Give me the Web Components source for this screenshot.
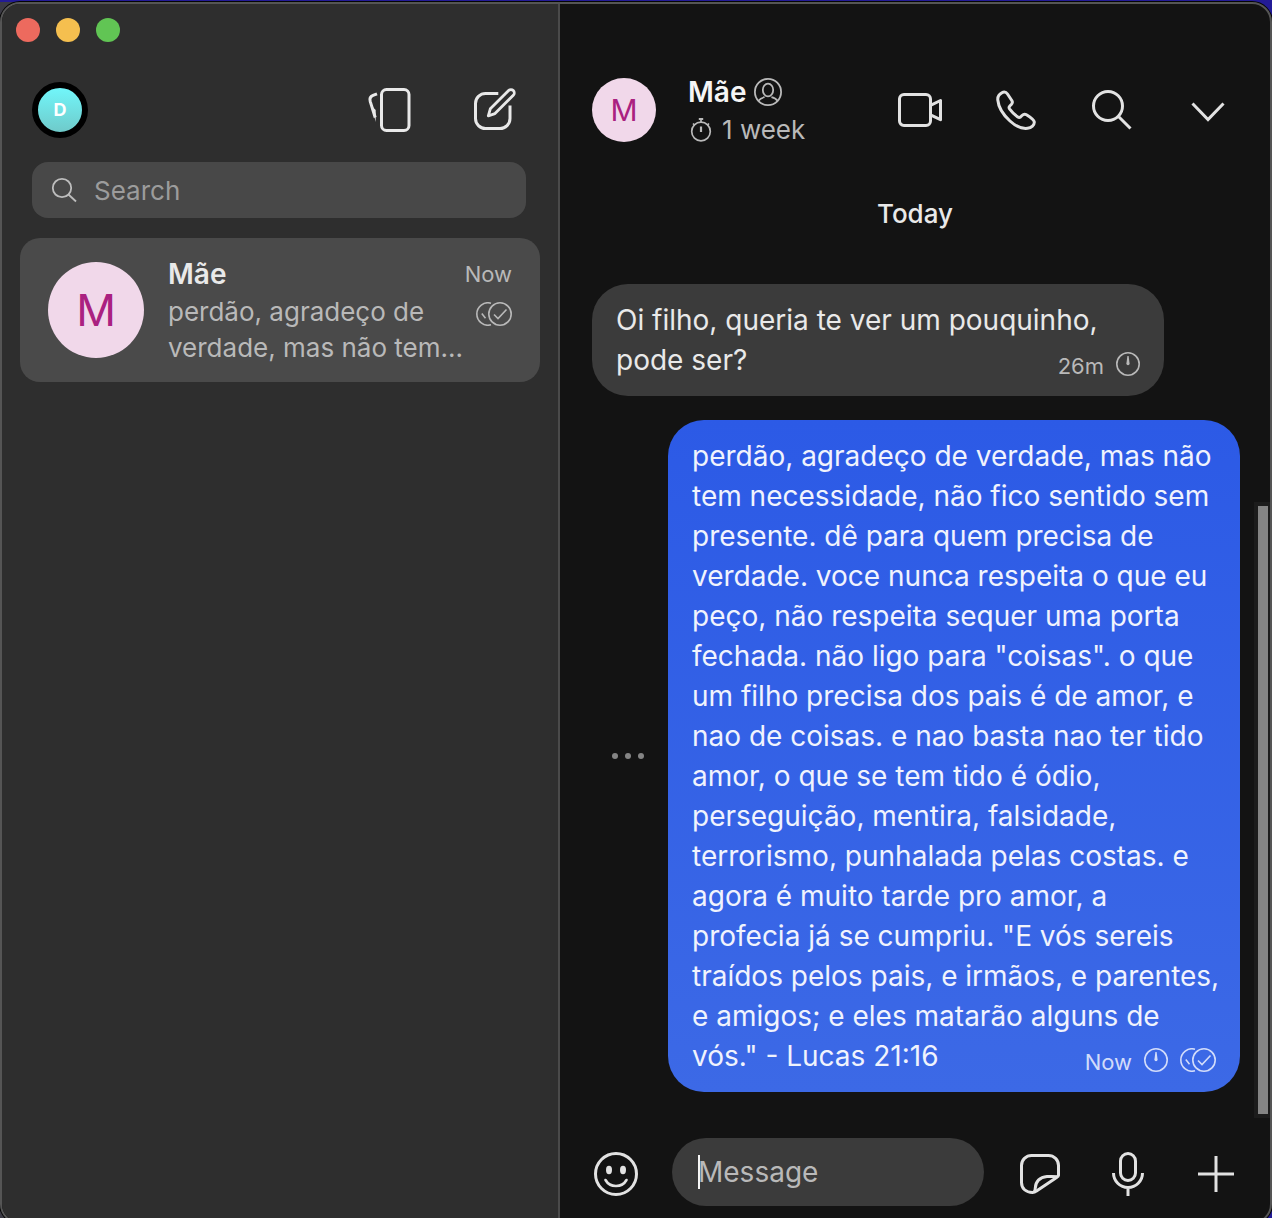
<!DOCTYPE html>
<html lang="pt">
<head>
<meta charset="utf-8">
<meta name="viewport" content="width=device-width, initial-scale=1">
<title>Signal</title>
<style>
  html, body { margin: 0; height: 100%; overflow: hidden; }
  body { background: linear-gradient(#231b96, #231b96) 0 0 / 100% 2px no-repeat, linear-gradient(to right, #3b3a44 30px, #231b96 30px);
    font-family: Inter, "Liberation Sans", sans-serif; color: #e9e9e9; font-size: 28px; }
</style>
</head>
<body>
<app-window>
  <chat-sidebar slot="sidebar">
    <conversation-item slot="list" name="Mãe" initial="M" when="Now">perdão, agradeço de verdade, mas não tem...</conversation-item>
  </chat-sidebar>
  <chat-header slot="header" name="Mãe" initial="M" timer="1 week"></chat-header>
  <chat-timeline slot="timeline" day="Today">
    <chat-message when="26m">Oi filho, queria te ver um pouquinho, pode ser?</chat-message>
    <chat-message outgoing when="Now">perdão, agradeço de verdade, mas não tem necessidade, não fico sentido sem presente. dê para quem precisa de verdade. voce nunca respeita o que eu peço, não respeita sequer uma porta fechada. não ligo para "coisas". o que um filho precisa dos pais é de amor, e nao de coisas. e nao basta nao ter tido amor, o que se tem tido é ódio, perseguição, mentira, falsidade, terrorismo, punhalada pelas costas. e agora é muito tarde pro amor, a profecia já se cumpriu. "E vós sereis traídos pelos pais, e irmãos, e parentes, e amigos; e eles matarão alguns de vós." - Lucas 21:16</chat-message>
  </chat-timeline>
  <chat-composer slot="composer"></chat-composer>
</app-window>

<script>
const BASE = `
  * { box-sizing: border-box; }
  button { appearance: none; border: 0; padding: 0; margin: 0; background: none; color: inherit; font: inherit; display: flex; flex: none; cursor: pointer; }
`;

const ICONS = {
  stack: [48, 48, `<rect x="15.5" y="3.5" width="27.5" height="41" rx="5"/><path d="M11 7.8 L7 9.4 Q3 11.2 4.2 15.4 L9.2 31.5"/><path d="M9.7 24v12L5.8 20z" fill="currentColor" stroke="none"/>`],
  compose: [48, 48, `<path d="M26.3 7.5H13.5a10 10 0 0 0-10 10v15a10 10 0 0 0 10 10h14.500a10 10 0 0 0 10-10V19.500"/><path d="M16.300 29.800l2-7L36.600 4.600a3.300 3.300 0 0 1 4.700 4.700L23 27.600z" stroke-width="2.800" stroke-linejoin="round"/>`],
  video: [48, 48, `<rect x="3.5" y="8.500" width="31" height="31" rx="4.500"/><path d="M34.500 19.300l10-4.800v19.200l-10-4.900" stroke-linejoin="round"/>`],
  phone: [48, 48, `<path stroke-linejoin="round" d="M9.800 6.800C7 8.200 5.500 10.500 5.800 14c.7 8 6.200 15.500 12.200 21s12 8 17.500 7.300c4-.5 7-3.300 6.800-6.300-.3-2-4.300-5-7.800-7.200-1.500-1-3-.8-4.500.7L28.500 31c-1 .8-2 .5-3-.2-3-2.300-6-5.300-8-8-.7-1.100-.5-2 .3-2.800l1.200-1.200c1.500-1.300 1.700-2.800.8-4.300L15.500 8C14 5.800 12 5.500 9.800 6.800z"/>`],
  search: [48, 48, `<circle cx="20" cy="20" r="14.500"/><path d="M30.500 30.500L42.500 42.500"/>`],
  chevron: [48, 48, `<path d="M8.500 17.500L24 33.500 39.500 17.500"/>`],
  smallSearch: [28, 28, `<circle cx="12" cy="12" r="9.200"/><path d="M18.500 18.500l7.500 7"/>`, 1.8],
  contact: [28, 28, `<circle cx="14" cy="14" r="13.100"/><ellipse cx="14" cy="12" rx="5.200" ry="6.300"/><path d="M4 23.300c2-2.600 4-3.700 6.600-4.100M24 23.300c-2-2.600-4-3.700-6.600-4.100"/>`, 1.8],
  stopwatch: [26, 24, `<circle cx="13" cy="13.500" r="9.300"/><path d="M13 4V1.500M5 5.500l1.800 1.800M21 5.500l-1.800 1.800"/><path d="M10.800 1h4.400M13 8.500v5.500" stroke-width="2.200"/>`, 1.7],
  timer: [24, 24, `<circle cx="12" cy="12" r="11.200"/><path d="M11.400 4h1.200l1 7.600a1.600 1.600 0 1 1-3.200 0z" fill="currentColor" stroke="none"/>`, 1.6],
  read: [36, 24, `<circle cx="24" cy="12" r="11.200"/><path d="M15 1.200A11.200 11.200 0 1 0 15 22.800M18 12.500l4 4 8.500-9M5.800 11.500l3.700 4.700"/>`, 1.6],
  dots: [36, 12, `<g fill="currentColor" stroke="none"><circle cx="5" cy="6" r="3"/><circle cx="18" cy="6" r="3"/><circle cx="31" cy="6" r="3"/></g>`],
  smile: [48, 48, `<circle cx="24" cy="24" r="20.500"/><path d="M13.500 30c4.500 8 16.500 8 21 0" stroke-linecap="round" stroke-width="2.600"/><g fill="currentColor" stroke="none"><ellipse cx="17" cy="20" rx="3" ry="4.200"/><ellipse cx="31" cy="20" rx="3" ry="4.200"/></g>`],
  sticker: [48, 48, `<path stroke-linejoin="round" d="M42.500 25.500V15.500a10 10 0 0 0-10-10h-17a10 10 0 0 0-10 10v17c0 6 4.500 10 11 10 1.500 0 2.700-.5 4-1.400l19-12.800c2-1.400 3-2 3-2.800z"/><path d="M42 26.800c-2.500-.4-7-.5-11-.3-7.500.4-11.500 5.500-11.700 11.500-.1 2-.6 3.300-1.300 4.300"/>`],
  mic: [48, 48, `<rect x="16.500" y="3.500" width="15" height="27" rx="7.500"/><path d="M9.500 23c0 8 6.500 14.500 14.500 14.500S38.500 31 38.500 23M24 37.500V46"/>`],
  plus: [48, 48, `<path d="M24 6v36M6 24h36"/>`]
};

class AppIcon extends HTMLElement {
  connectedCallback() {
    const [w, h, body, stroke = 3] = ICONS[this.getAttribute('name')];
    this.attachShadow({ mode: 'open' }).innerHTML = `
      <style>:host { display: block; flex: none; } svg { display: block; }</style>
      <svg width="${w}" height="${h}" viewBox="0 0 ${w} ${h}" fill="none" stroke="currentColor" stroke-width="${stroke}" aria-hidden="true">${body}</svg>`;
  }
}

class AppAvatar extends HTMLElement {
  connectedCallback() {
    this.attachShadow({ mode: 'open' }).innerHTML = `
      <style>
        :host { display: flex; flex: none; align-items: center; justify-content: center; border-radius: 50%;
          width: var(--size, 64px); height: var(--size, 64px); box-sizing: border-box;
          background: #f1d8ea; color: #aa2180; font-size: var(--initial, 30px); line-height: 1; }
      </style><slot></slot>`;
  }
}

class AppWindow extends HTMLElement {
  connectedCallback() {
    this.attachShadow({ mode: 'open' }).innerHTML = `
      <style>${BASE}
        :host { display: flex; box-sizing: border-box; margin-top: 2px; height: calc(100vh + 4px);
          border: 2px solid #555; border-radius: 20px; overflow: hidden; background: #131313; box-shadow: 0 0 0 1px #050505; }
        ::slotted([slot=sidebar]) { flex: 0 0 558px; }
        main { flex: 1; min-width: 0; display: flex; flex-direction: column; padding-bottom: 16px; }
      </style>
      <slot name="sidebar"></slot>
      <main><slot name="header"></slot><slot name="timeline"></slot><slot name="composer"></slot></main>`;
  }
}

class ChatSidebar extends HTMLElement {
  connectedCallback() {
    this.attachShadow({ mode: 'open' }).innerHTML = `
      <style>${BASE}
        :host { display: flex; flex-direction: column; box-sizing: border-box; background: #2e2e2e; border-right: 2px solid #4a4a4a; }
        .lights { display: flex; gap: 16px; padding: 14px 14px 0; }
        .lights button { width: 24px; height: 24px; border-radius: 50%; background: var(--c); }
        .bar { display: flex; align-items: center; gap: 58px; padding: 40px 38px 0 30px; }
        .me { margin-right: auto; }
        .me app-avatar { --size: 56px; --initial: 18px; border: 6px solid #000; background: linear-gradient(#71f6fa, #6fcaca); color: #fff; font-weight: 700; }
        label { display: flex; align-items: center; gap: 16px; height: 56px; margin: 24px 32px 20px 30px; padding: 0 20px 0 18px;
          border-radius: 16px; background: #484848; color: #bdbdbd; }
        input { flex: 1; min-width: 0; border: 0; padding: 0; outline: 0; background: none; color: #e9e9e9; font: inherit; font-size: 26px; }
        input::placeholder { color: #9c9c9c; opacity: 1; }
        nav { padding: 0 18px; }
      </style>
      <div class="lights">
        <button style="--c:#ed6a5e" aria-label="Close"></button>
        <button style="--c:#f5bf4f" aria-label="Minimize"></button>
        <button style="--c:#61c554" aria-label="Zoom"></button>
      </div>
      <div class="bar">
        <button class="me" aria-label="Profile"><app-avatar>D</app-avatar></button>
        <button aria-label="Stories"><app-icon name="stack"></app-icon></button>
        <button aria-label="New chat"><app-icon name="compose"></app-icon></button>
      </div>
      <label><app-icon name="smallSearch"></app-icon><input type="text" placeholder="Search" aria-label="Search"></label>
      <nav><slot name="list"></slot></nav>`;
  }
}

class ConversationItem extends HTMLElement {
  connectedCallback() {
    const a = n => this.getAttribute(n);
    this.attachShadow({ mode: 'open' }).innerHTML = `
      <style>${BASE}
        :host { display: block; }
        button { width: 100%; align-items: center; gap: 24px; padding: 16px 28px; min-height: 144px; border-radius: 20px; background: #4a4a4a; text-align: left; }
        app-avatar { --size: 96px; --initial: 44px; }
        .text { flex: 1; min-width: 0; }
        .row { display: flex; justify-content: space-between; align-items: center; line-height: 40px; }
        .row + .row { align-items: flex-start; color: #b9b9b9; line-height: 36px; }
        b { font-weight: 600; }
        .when { font-size: 22px; color: #b9b9b9; }
        .snippet { font-size: 26px; max-width: 296px; }
        .row app-icon { margin-top: 8px; }
      </style>
      <button>
        <app-avatar>${a('initial')}</app-avatar>
        <span class="text">
          <span class="row"><b>${a('name')}</b><span class="when">${a('when')}</span></span>
          <span class="row"><span class="snippet"><slot></slot></span><app-icon name="read"></app-icon></span>
        </span>
      </button>`;
  }
}

class ChatHeader extends HTMLElement {
  connectedCallback() {
    const a = n => this.getAttribute(n);
    this.attachShadow({ mode: 'open' }).innerHTML = `
      <style>${BASE}
        :host { display: flex; align-items: center; flex: none; padding: 68px 38px 8px 32px; color: #e2e2e2; }
        .who { flex: 1; min-width: 0; align-items: center; gap: 32px; text-align: left; }
        .names { display: flex; flex-direction: column; gap: 2px; padding-top: 2px; }
        .line { display: flex; align-items: center; gap: 8px; line-height: 36px; }
        b { font-weight: 600; color: #f5f5f5; }
        .line app-icon { color: #b9b9b9; }
        .timer { font-size: 26px; color: #b9b9b9; }
        .actions { display: flex; gap: 48px; }
      </style>
      <button class="who">
        <app-avatar>${a('initial')}</app-avatar>
        <span class="names">
          <span class="line"><b>${a('name')}</b><app-icon name="contact"></app-icon></span>
          <span class="line timer"><app-icon name="stopwatch"></app-icon>${a('timer')}</span>
        </span>
      </button>
      <div class="actions">
        <button aria-label="Video call"><app-icon name="video"></app-icon></button>
        <button aria-label="Voice call"><app-icon name="phone"></app-icon></button>
        <button aria-label="Search chat"><app-icon name="search"></app-icon></button>
        <button aria-label="More"><app-icon name="chevron"></app-icon></button>
      </div>`;
  }
}

class ChatTimeline extends HTMLElement {
  connectedCallback() {
    this.attachShadow({ mode: 'open' }).innerHTML = `
      <style>${BASE}
        :host { display: flex; flex-direction: column; flex: 1; min-height: 0; position: relative; }
        .day { text-align: center; font-size: 26px; font-weight: 500; line-height: 40px; margin: 38px 0 50px; }
        .list { display: flex; flex-direction: column; gap: 24px; padding: 0 30px 0 32px; }
        .track { position: absolute; top: 36%; right: 0; bottom: 0; width: 16px; padding: 4px 2px 4px 4px; background: #1c1c1c; }
        .thumb { height: 100%; background: #848484; }
      </style>
      <div class="day">${this.getAttribute('day')}</div>
      <div class="list"><slot></slot></div>
      <div class="track"><div class="thumb"></div></div>`;
  }
}

class ChatMessage extends HTMLElement {
  connectedCallback() {
    const out = this.hasAttribute('outgoing');
    this.attachShadow({ mode: 'open' }).innerHTML = `
      <style>${BASE}
        :host { display: flex; align-items: center; gap: 22px; }
        :host([outgoing]) { justify-content: flex-end; }
        .bubble { display: grid; max-width: 572px; padding: 16px 20px 16px 24px; border-radius: 36px; background: #3b3b3b; line-height: 40px; }
        :host([outgoing]) .bubble { background: linear-gradient(#2c5ae6, #3c69e6); color: #f0f3fd; }
        .text, .meta { grid-area: 1 / 1; }
        .meta { align-self: end; justify-self: end; display: flex; align-items: center; gap: 12px; padding-right: 4px; font-size: 22px; line-height: 28px; color: #b9b9b9; }
        .when { padding-top: 4px; }
        :host([outgoing]) .meta { color: #d2dcfa; }
        .more { color: #848484; }
      </style>
      ${out ? '<button class="more" aria-label="Message actions"><app-icon name="dots"></app-icon></button>' : ''}
      <div class="bubble">
        <div class="text"><slot></slot></div>
        <div class="meta"><span class="when">${this.getAttribute('when')}</span><app-icon name="timer"></app-icon>${out ? '<app-icon name="read"></app-icon>' : ''}</div>
      </div>`;
  }
}

class ChatComposer extends HTMLElement {
  connectedCallback() {
    this.attachShadow({ mode: 'open' }).innerHTML = `
      <style>${BASE}
        :host { display: flex; align-items: flex-start; flex: none; gap: 32px; padding: 20px 30px 0 32px; color: #e2e2e2; }
        label { flex: 1; min-width: 0; display: flex; align-items: center; height: 68px; border-radius: 34px; padding: 0 26px; background: #3b3b3b; }
        .caret { width: 2px; height: 34px; margin-right: -2px; background: #f5f5f5; }
        input { flex: 1; min-width: 0; border: 0; padding: 0; outline: 0; background: none; color: #e9e9e9; font: inherit; }
        input::placeholder { color: #b9b9b9; opacity: 1; }
        button { margin-top: 12px; }
        .tools { display: flex; gap: 40px; }
      </style>
      <button aria-label="Emoji"><app-icon name="smile"></app-icon></button>
      <label><span class="caret"></span><input type="text" placeholder="Message" aria-label="Message"></label>
      <div class="tools">
        <button aria-label="Sticker"><app-icon name="sticker"></app-icon></button>
        <button aria-label="Voice message"><app-icon name="mic"></app-icon></button>
        <button aria-label="Attach"><app-icon name="plus"></app-icon></button>
      </div>`;
  }
}

customElements.define('app-icon', AppIcon);
customElements.define('app-avatar', AppAvatar);
customElements.define('app-window', AppWindow);
customElements.define('chat-sidebar', ChatSidebar);
customElements.define('conversation-item', ConversationItem);
customElements.define('chat-header', ChatHeader);
customElements.define('chat-timeline', ChatTimeline);
customElements.define('chat-message', ChatMessage);
customElements.define('chat-composer', ChatComposer);
</script>
</body>
</html>
